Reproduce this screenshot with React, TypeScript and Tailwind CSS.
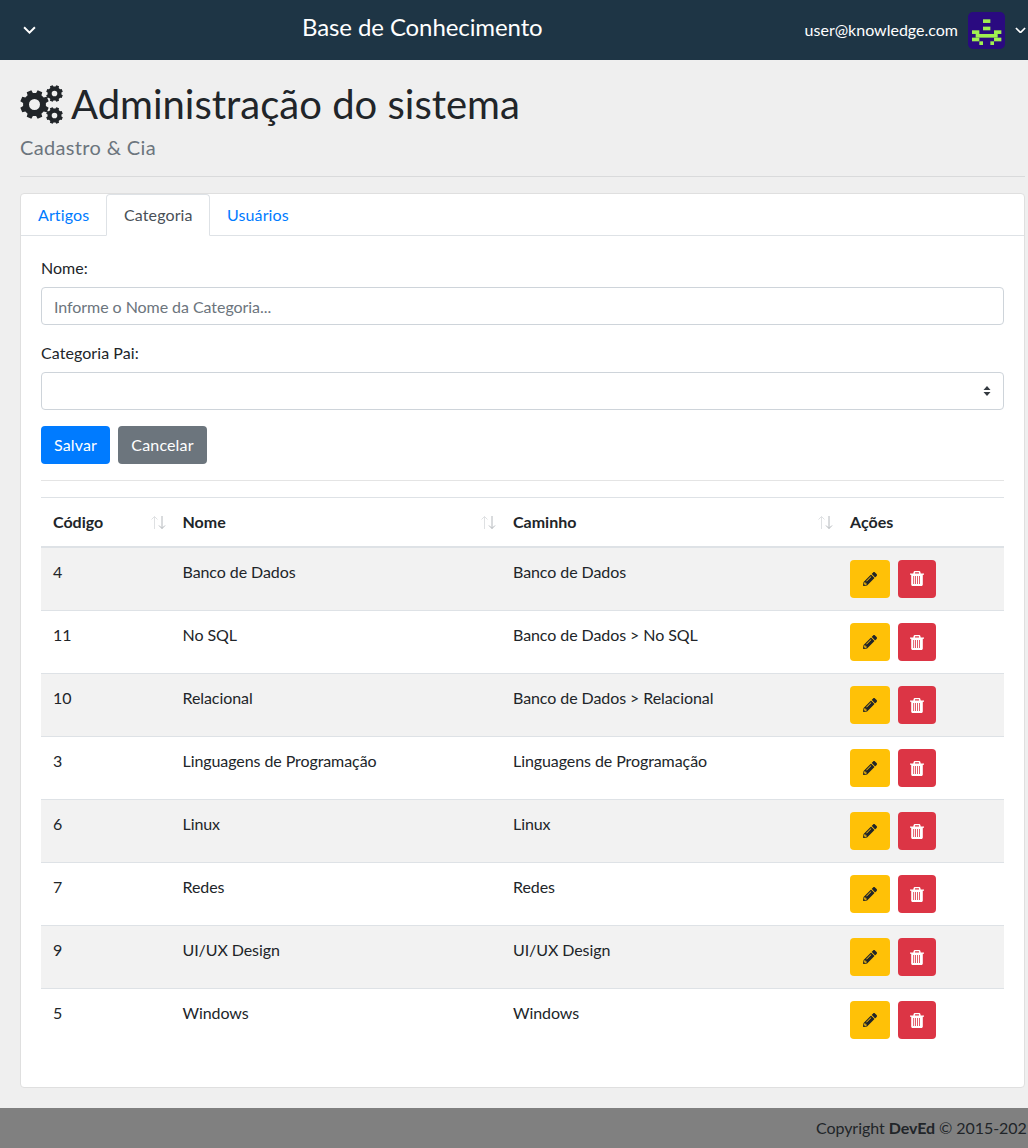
import { FaPencilAlt } from 'react-icons/fa';

const rows = [
  { id: 4, nome: 'Banco de Dados', caminho: 'Banco de Dados' },
  { id: 11, nome: 'No SQL', caminho: 'Banco de Dados > No SQL' },
  { id: 10, nome: 'Relacional', caminho: 'Banco de Dados > Relacional' },
  { id: 3, nome: 'Linguagens de Programação', caminho: 'Linguagens de Programação' },
  { id: 6, nome: 'Linux', caminho: 'Linux' },
  { id: 7, nome: 'Redes', caminho: 'Redes' },
  { id: 9, nome: 'UI/UX Design', caminho: 'UI/UX Design' },
  { id: 5, nome: 'Windows', caminho: 'Windows' },
];

function Chevron({ width }: { width: number }) {
  return (
    <svg width={width} height={width * 0.6} viewBox="0 0 12 7" fill="none" stroke="currentColor" strokeWidth="1.800">
      <path d="M1 1l5 5 5-5" />
    </svg>
  );
}

function SortIcon() {
  return (
    <svg width="16" height="16" viewBox="0 0 16 16" fill="none" strokeWidth="1">
      <path d="M4.500 15V2.500M1.500 5.500l3-3 3 3" stroke="#dfe1e3" />
      <path d="M12 2v12.500M9 11.500l3 3 3-3" stroke="#b4b8bc" />
    </svg>
  );
}

// square toothed gear, outer edge + round hole
function gearPath(cx: number, cy: number, outer: number, root: number, hole: number, teeth: number) {
  const pt = (r: number, a: number) => `${(cx + r * Math.cos(a)).toFixed(2)} ${(cy + r * Math.sin(a)).toFixed(2)}`;
  const step = (Math.PI * 2) / teeth;
  let d = '';
  for (let i = 0; i < teeth; i++) {
    const a = i * step + step / 2;
    d += `${i === 0 ? 'M' : 'L'}${pt(root, a - step * 0.32)}L${pt(outer, a - step * 0.22)}L${pt(outer, a + step * 0.22)}L${pt(root, a + step * 0.32)}`;
  }
  d += `Z M${cx - hole} ${cy}a${hole} ${hole} 0 1 0 ${hole * 2} 0a${hole} ${hole} 0 1 0 ${-hole * 2} 0Z`;
  return d;
}

function CogsIcon() {
  return (
    <svg width="44" height="40" viewBox="0 0 44 40" fill="currentColor" className="shrink-0">
      <path fillRule="evenodd" d={gearPath(14.500, 19.500, 14.500, 11.500, 5.500, 8)} />
      <path fillRule="evenodd" d={gearPath(34.500, 8.500, 8.500, 7, 2.800, 8)} />
      <path fillRule="evenodd" d={gearPath(34.500, 30.500, 8.500, 7, 2.800, 8)} />
    </svg>
  );
}

function TrashIcon() {
  return (
    <svg width="14" height="15" viewBox="0 0 14 15" fill="white">
      <path
        fillRule="evenodd"
        d="M5 0h4c.8 0 1.400.6 1.500 1.400L10.700 2.500H14v1.300h-1.200v9.700c0 .8-.6 1.500-1.400 1.500H2.600c-.8 0-1.400-.7-1.400-1.500V3.800H0V2.500h3.300l.2-1.100C3.600.6 4.200 0 5 0zm.1 1.200-.2 1.300h4.200l-.2-1.300H5.100zM3.300 5v8h.8V5h-.8zm1.900 0v8h.8V5h-.8zm1.900 0v8h.8V5h-.8zm1.900 0v8h.8V5h-.8z"
      />
    </svg>
  );
}

function Avatar() {
  const cells = [
    [3, 0, 2, 1], [3, 2, 2, 1], [0, 3, 2, 1], [6, 3, 2, 1], [1, 4, 6, 1], [0, 5, 2, 1], [6, 5, 2, 1], [2, 6, 1, 1], [5, 6, 1, 1],
  ];
  return (
    <div className="w-[37px] h-[37px] rounded-[5px] bg-[#2a0a80] ml-[10px] overflow-hidden">
      <svg width="37" height="37" viewBox="0 0 37 37">
        {cells.map(([x, y, w, h], i) => (
          <rect key={i} x={4 + x * 3.670} y={7.300 + y * 3.670} width={w * 3.670} height={h * 3.670} fill="#a0f050" />
        ))}
      </svg>
    </div>
  );
}

export default function App() {
  return (
    <div className="w-[1028px] h-[1148px] overflow-hidden flex flex-col bg-[#efefef] text-[#212529] font-['Lato',sans-serif] text-[16px]">
      <header className="h-[60px] shrink-0 bg-[#1e3545] text-white flex items-center">
        <span className="ml-[23px]"><Chevron width={13} /></span>
        <h1 className="ml-[266px] text-[24px] font-normal tracking-[-0.1px] relative -top-[3px]">Base de Conhecimento</h1>
        <div className="ml-auto flex items-center">
          <span className="text-[16px]">user@knowledge.com</span>
          <Avatar />
          <span className="ml-[10px] mr-[2px]"><Chevron width={11} /></span>
        </div>
      </header>

      <main className="flex-1 px-[20px] pt-[20px] w-[1045px]">
        <div className="flex items-center gap-[7px] h-[50px]">
          <CogsIcon />
          <span className="text-[40px] font-normal leading-[48px] relative -top-[1px]">Administração do sistema</span>
        </div>
        <div className="text-[20px] text-[#6c757d] mt-[5px] leading-[24px] tracking-[0.35px]">Cadastro &amp; Cia</div>
        <hr className="mt-[17px] border-t border-[#d9dadb]" />

        <div className="mt-[16px] h-[895px] bg-white border border-[#dfdfdf] rounded-[4px]">
          <div className="flex h-[42px] border-b border-[#dee2e6] pl-0 items-end tracking-[0.12px]">
            <a className="h-[41px] w-[85px] pl-[17px] flex items-center text-[#007bff]">Artigos</a>
            <a className="h-[42px] w-[104px] pl-[17px] flex items-center border border-b-white border-[#dee2e6] rounded-t-[4px] text-[#495057] -mb-px">Categoria</a>
            <a className="h-[41px] pl-[17px] flex items-center text-[#007bff]">Usuários</a>
          </div>

          <div className="px-[20px] pt-[20px]">
            <label className="block leading-[24px]">Nome:</label>
            <input
              readOnly
              placeholder="Informe o Nome da Categoria..."
              className="block mt-[7px] w-full h-[38px] px-[12px] border border-[#ced4da] rounded-[4px] placeholder:text-[#6c757d] outline-none tracking-[-0.06px]"
            />
            <label className="block mt-[16px] leading-[24px] tracking-[0.07px]">Categoria Pai:</label>
            <div className="mt-[7px] h-[38px] border border-[#ced4da] rounded-[4px] flex items-center justify-end pr-[12px]">
              <svg width="8" height="12" viewBox="0 0 8 12" fill="#343a40">
                <path d="M4 1 7.500 5H.5zM4 11 .5 7h7z" />
              </svg>
            </div>
            <div className="mt-[16px] flex gap-[8px] tracking-[0.15px]">
              <button className="h-[38px] w-[69px] bg-[#007bff] text-white rounded-[4px]">Salvar</button>
              <button className="h-[38px] w-[89px] bg-[#6c757d] text-white rounded-[4px]">Cancelar</button>
            </div>
            <hr className="mt-[16px] border-t border-[#e4e4e4]" />

            <table className="mt-[16px] w-full table-fixed border-collapse">
              <colgroup>
                <col className="w-[129.500px]" />
                <col className="w-[330.500px]" />
                <col className="w-[337px]" />
                <col />
              </colgroup>
              <thead>
                <tr className="h-[49px] border-t border-b-2 border-t-[#dee2e6] border-b-[#dee2e6] text-left font-bold">
                  {['Código', 'Nome', 'Caminho'].map(h => (
                    <th key={h} className="px-[12px] font-bold">
                      <div className="flex items-center justify-between -mr-[7px]">
                        {h}
                        <SortIcon />
                      </div>
                    </th>
                  ))}
                  <th className="px-[12px] font-bold">Ações</th>
                </tr>
              </thead>
              <tbody>
                {rows.map((r, i) => (
                  <tr key={r.id} className={`border-t border-[#dee2e6] first:border-t-0 tracking-[-0.08px] ${i === 0 ? 'h-[64px]' : 'h-[63px]'} ${i % 2 === 0 ? 'bg-[#f2f2f2]' : 'bg-white'}`}>
                    <td className="px-[12px] pt-[12px] align-top">{r.id}</td>
                    <td className="px-[12px] pt-[12px] align-top">{r.nome}</td>
                    <td className="px-[12px] pt-[12px] align-top">{r.caminho}</td>
                    <td className="px-[12px] pt-[12px] align-top">
                      <div className="flex gap-[8px]">
                        <button className="w-[40px] h-[38px] bg-[#ffc107] rounded-[4px] flex items-center justify-center text-[#212529]">
                          <FaPencilAlt className="text-[14px]" />
                        </button>
                        <button className="w-[38px] h-[38px] bg-[#dc3545] rounded-[4px] flex items-center justify-center">
                          <TrashIcon />
                        </button>
                      </div>
                    </td>
                  </tr>
                ))}
              </tbody>
            </table>
          </div>
        </div>
      </main>

      <footer className="h-[40px] shrink-0 bg-[#808080] flex items-center whitespace-nowrap overflow-hidden">
        <span className="ml-[816px] tracking-[-0.06px]">Copyright <strong className="font-bold">DevEd</strong> © 2015-2021</span>
      </footer>
    </div>
  );
}
